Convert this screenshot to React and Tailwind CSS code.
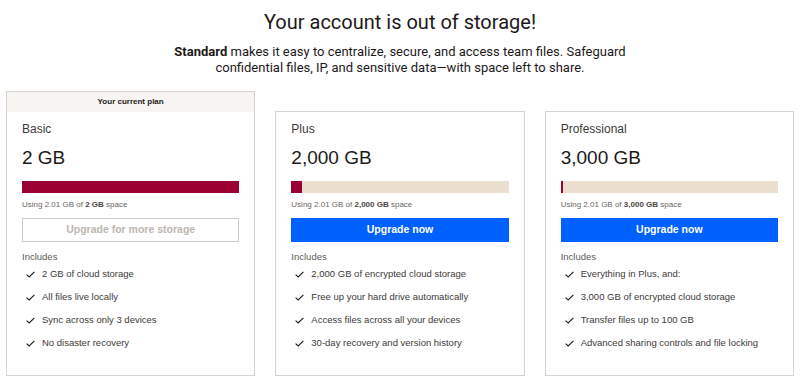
const plans = [
  {
    name: "Basic",
    amount: "2 GB",
    pct: 100,
    current: true,
    features: ["2 GB of cloud storage", "All files live locally", "Sync across only 3 devices", "No disaster recovery"],
  },
  {
    name: "Plus",
    amount: "2,000 GB",
    pct: 5,
    features: [
      "2,000 GB of encrypted cloud storage",
      "Free up your hard drive automatically",
      "Access files across all your devices",
      "30-day recovery and version history",
    ],
  },
  {
    name: "Professional",
    amount: "3,000 GB",
    pct: 1,
    features: [
      "Everything in Plus, and:",
      "3,000 GB of encrypted cloud storage",
      "Transfer files up to 100 GB",
      "Advanced sharing controls and file locking",
    ],
  },
];

function Check() {
  return (
    <svg width="9" height="7" viewBox="0 0 9 7" className="shrink-0">
      <path d="M0.6 3.6 L3.2 6 L8.4 0.8" fill="none" stroke="#1e1919" strokeWidth="1.1" />
    </svg>
  );
}

function PlanCard({ plan }) {
  return (
    <div className="flex-1 border border-[#d8d3ce] bg-white">
      {plan.current && (
        <div className="h-[20px] bg-[#f7f5f2] flex items-center justify-center text-[8px] font-bold text-[#1e1919]">
          Your current plan
        </div>
      )}
      <div className="px-[15px] pt-[10px] pb-[26px]">
        <div className="text-[12px] leading-[14px] text-[#3d3a38]">{plan.name}</div>
        <div className="mt-[10px] text-[19px] leading-[24px] text-[#1e1919]">{plan.amount}</div>
        <div className="mt-[11px] h-[12px] bg-[#ebe0cf]">
          <div className="h-full bg-[#9b0032]" style={{ width: `${plan.pct}%` }} />
        </div>
        <div className="mt-[7px] text-[8px] leading-[10px] text-[#6b6763]">
          Using 2.01 GB of <span className="font-bold text-[#4a4643]">{plan.amount}</span> space
        </div>
        {plan.current ? (
          <button className="mt-[8px] w-full h-[24px] border border-[#cfcac4] text-[10.5px] font-bold text-[#bdb7b0]">
            Upgrade for more storage
          </button>
        ) : (
          <button className="mt-[8px] w-full h-[24px] bg-[#0061fe] text-[10.5px] font-bold text-white">
            Upgrade now
          </button>
        )}
        <div className="mt-[9px] text-[9.5px] leading-[12px] text-[#5e5a57]">Includes</div>
        <ul className="mt-[5px] flex flex-col gap-[11px]">
          {plan.features.map((f) => (
            <li key={f} className="flex items-center gap-[7px] pl-[4px] text-[9.5px] leading-[12px] text-[#3d3a38]">
              <Check />
              {f}
            </li>
          ))}
        </ul>
      </div>
    </div>
  );
}

export default function App() {
  return (
    <div className="w-[800px] h-[388px] bg-white font-['Liberation_Sans',Arial,sans-serif]">
      <h1 className="pt-[9px] text-center text-[20px] leading-[26px] text-[#1e1919] font-['Roboto',sans-serif]">
        Your account is out of storage!
      </h1>
      <p className="mx-auto mt-[9px] w-[480px] text-center text-[13px] leading-[16px] text-[#1e1919] font-['Roboto',sans-serif]">
        <span className="font-bold">Standard</span> makes it easy to centralize, secure, and access team files. Safeguard
        confidential files, IP, and sensitive data—with space left to share.
      </p>
      <div className="mt-[15px] px-[6px] flex items-end gap-5">
        {plans.map((p) => (
          <PlanCard key={p.name} plan={p} />
        ))}
      </div>
    </div>
  );
}
